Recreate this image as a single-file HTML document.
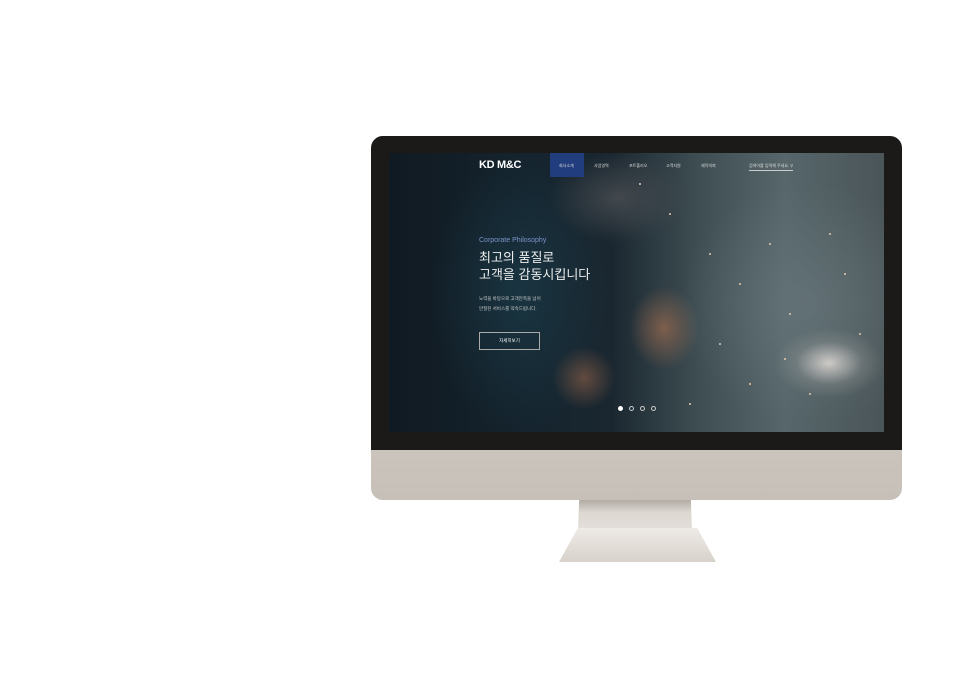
<!DOCTYPE html>
<html><head><meta charset="utf-8"><style>
body{margin:0;width:960px;height:700px;background:#fff;position:relative;overflow:hidden;font-family:"Liberation Sans","Noto Sans CJK KR",sans-serif}
.mon{position:absolute;left:371px;top:136px;width:531px;height:364px;border-radius:12px;overflow:hidden;background:linear-gradient(#d8d3cd,#cfc9c2 70%,#c6c0b8);}
.bez{position:absolute;left:0;top:0;width:531px;height:314px;background:#1b1a19}
.scr{position:absolute;left:18px;top:17px;width:495px;height:279px;overflow:hidden;
background:
radial-gradient(ellipse 55px 35px at 440px 210px,rgba(225,220,215,.85),rgba(160,160,160,.3) 60%,transparent),
radial-gradient(ellipse 130px 120px at 420px 150px,rgba(110,125,130,.55),transparent),
radial-gradient(ellipse 50px 60px at 275px 175px,rgba(150,105,80,.75),transparent 70%),
radial-gradient(ellipse 45px 45px at 195px 225px,rgba(130,90,70,.7),transparent 70%),
radial-gradient(ellipse 70px 45px at 230px 45px,rgba(70,75,80,.9),transparent),
radial-gradient(ellipse 90px 140px at 130px 140px,rgba(30,70,85,.5),transparent),
linear-gradient(90deg,#101a22 0%,#15242e 30%,#1a2730 45%,#3e4d52 62%,#56666a 80%,#4a5558 100%)}
.nav{position:absolute;top:0;left:0;width:100%;height:25px;font-size:4px;color:#ddd}
.logo{position:absolute;left:90px;top:6px;color:#fff;font-weight:bold;font-size:11px;letter-spacing:-.3px}
.act{position:absolute;left:161px;top:0;width:34px;height:24px;background:#213d7e}
.nav span{position:absolute;top:10px}
.txt{position:absolute;left:90px;color:#eee}
.btn{position:absolute;left:90px;top:179px;width:59px;height:16px;border:1px solid #aaa;color:#fff;font-size:4.5px;text-align:center;line-height:16px}
.dots{position:absolute;top:245px;left:229px}
.dots i{display:inline-block;width:3px;height:3px;border:1px solid #ccc;border-radius:50%;margin-right:6px}
.sp{position:absolute;width:2px;height:2px;border-radius:50%;background:#e8c9a8}
.neck{position:absolute;left:578px;top:500px;width:114px;height:30px;background:linear-gradient(#b0aba5,#dcd7d1 40%,#e4dfda);clip-path:polygon(1% 0,99% 0,100% 100%,0 100%)}
.base{position:absolute;left:559px;top:528px;width:157px;height:34px;background:linear-gradient(#eeeae6,#d8d2cb);clip-path:polygon(12% 0,88% 0,100% 100%,0 100%)}
</style></head><body>
<div class="neck"></div><div class="base"></div>
<div class="mon"><div class="bez"><div class="scr">
<div class="sp" style="left:320px;top:100px"></div><div class="sp" style="left:350px;top:130px"></div><div class="sp" style="left:380px;top:90px"></div><div class="sp" style="left:400px;top:160px"></div><div class="sp" style="left:455px;top:120px"></div><div class="sp" style="left:470px;top:180px"></div><div class="sp" style="left:330px;top:190px"></div><div class="sp" style="left:360px;top:230px"></div><div class="sp" style="left:300px;top:250px"></div><div class="sp" style="left:420px;top:240px"></div><div class="sp" style="left:250px;top:30px"></div><div class="sp" style="left:280px;top:60px"></div><div class="sp" style="left:395px;top:205px"></div><div class="sp" style="left:440px;top:80px"></div>
<div class="nav"><div class="logo">KD M&amp;C</div><div class="act"></div>
<span style="left:170px">회사소개</span><span style="left:205px">사업영역</span><span style="left:240px">포트폴리오</span><span style="left:277px">고객지원</span><span style="left:312px">제작의뢰</span>
<span style="left:360px;border-bottom:1px solid #ccc;padding-bottom:1px">검색어를 입력해 주세요. &#9906;</span></div>
<div class="txt" style="top:84px;font-size:7px;color:#7c93c9">Corporate Philosophy</div>
<div class="txt" style="top:96px;font-size:13px;line-height:17px">최고의 품질로<br>고객을 감동시킵니다</div>
<div class="txt" style="top:141px;font-size:4.5px;line-height:10px;color:#ccc">노력을 바탕으로 고객만족을 넘어<br>만질된 서비스를 약속드립니다.</div>
<div class="btn">자세히보기</div>
<div class="dots"><i style="background:#fff;border-color:#fff"></i><i></i><i></i><i></i></div>
</div></div></div>
</body></html>
